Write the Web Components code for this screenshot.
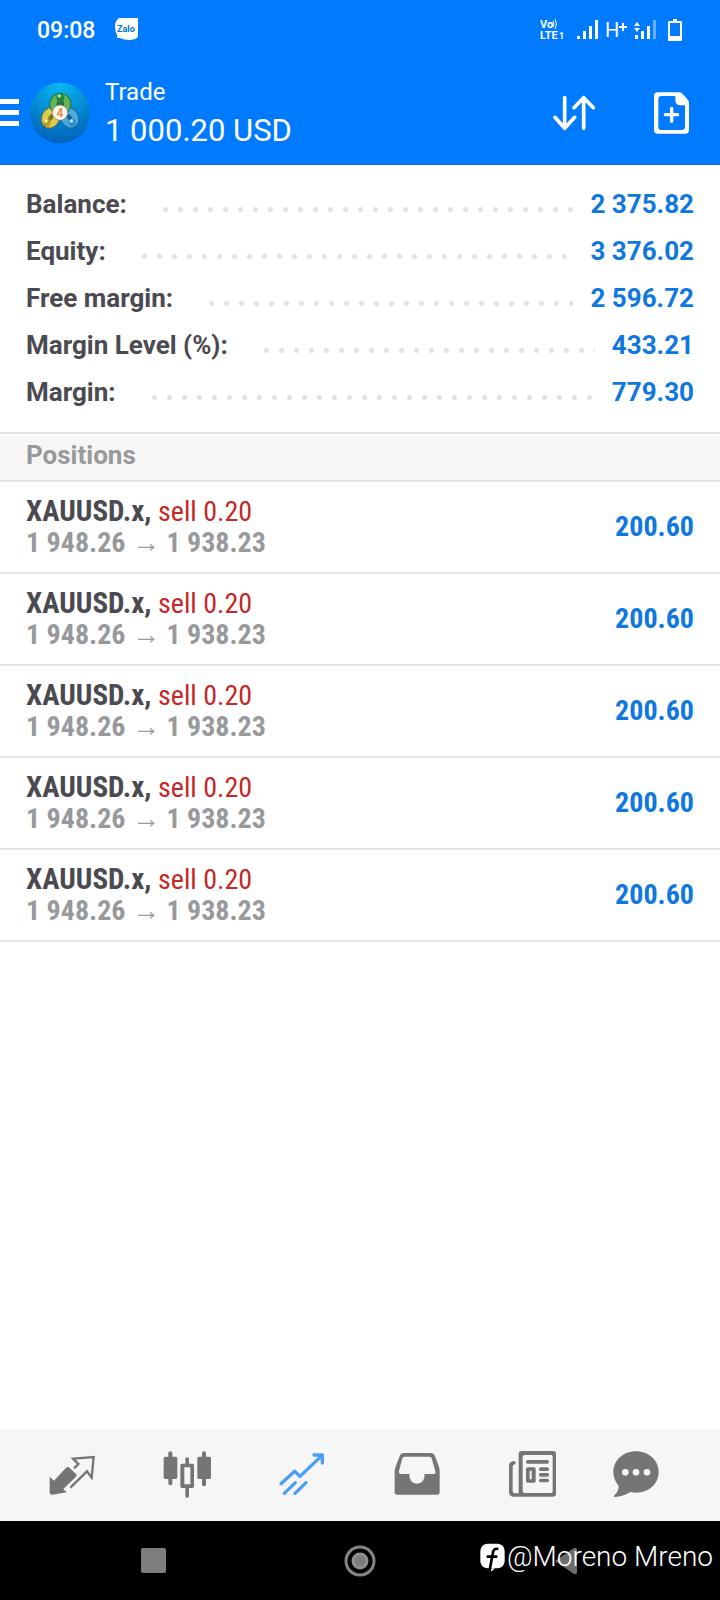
<!DOCTYPE html>
<html lang="en">
<head>
<meta charset="utf-8">
<meta name="viewport" content="width=device-width, initial-scale=1">
<title>Trade</title>
<style>
  html, body { margin: 0; }
  body { font-family: Roboto, "Liberation Sans", sans-serif; background: #fff; color: #4a4a50; }
</style>
</head>
<body>
<trade-app></trade-app>

<script>
const define = (name, html) => {
  const template = document.createElement('template');
  template.innerHTML = html;
  customElements.define(name, class extends HTMLElement {
    constructor() {
      super();
      this.attachShadow({ mode: 'open' }).append(template.content.cloneNode(true));
    }
  });
};

define('status-bar', `
<style>
  :host { display: flex; align-items: center; justify-content: space-between; height: 62px; padding: 0 36px 0 37px; color: #fff; }
  div { display: flex; align-items: center; }
  .left { gap: 20px; }
  time { font-size: 23px; line-height: 28px; font-weight: 500; }
  svg { display: block; }
  .left svg { margin-bottom: 4px; }
  text { fill: #fff; }
</style>
<div class="left">
  <time>09:08</time>
  <svg width="24" height="24" viewBox="0 0 24 24" role="img" aria-label="Zalo">
    <path fill="#fff" d="M4 1H22Q23 1 23 2V20Q20 23 14 23Q9 23 5 21L2 21Q3 20 2 18Q0 14 0 9Q0 4 4 1Z"/>
    <text x="2" y="15" style="fill:#0072e0;font:700 9px Roboto,sans-serif">Zalo</text>
  </svg>
</div>
<div>
  <svg width="144" height="24" viewBox="0 0 144 24">
    <text x="0" y="9" font-size="11" font-weight="700">Vo</text>
    <path d="M13 2Q15 5 13 8M15 0Q18 5 15 10" fill="none" stroke="#fff" stroke-width="1"/>
    <text x="0" y="20" font-size="11" font-weight="700">LTE</text>
    <text x="19" y="20" font-size="9" font-weight="700">1</text>
    <path fill="#fff" d="M37 17h3v3h-3zM43 12h3v8h-3zM49 7h3v13h-3zM55 1h3v19h-3z"/>
    <text x="65" y="18" font-size="20">H</text>
    <path fill="#fff" d="M79 7h8v2h-8zM82 4h2v8h-2zM94 7l3-4 3 4zM94 9l3 4 3-4zM95 16h3v4h-3zM101 12h3v8h-3zM107 7h3v13h-3z"/>
    <path fill="#65b3ff" d="M113 1h3v19h-3z"/>
    <path fill="#fff" fill-rule="evenodd" d="M133 0h4v2h4q1 0 1 1v18q0 1-1 1h-12q-1 0-1-1V3q0-1 1-1h4zM130 4v13h10V4z"/>
  </svg>
</div>`);

define('app-header', `
<style>
  :host { display: flex; align-items: center; height: 102px; padding-right: 31px; color: #fff; border-bottom: 1px solid #1467bd; }
  button { border: 0; background: none; padding: 0; color: inherit; cursor: pointer; }
  svg { display: block; }
  .menu { margin-right: 11px; }
  .titles { flex: 1; padding: 0 0 2px 15px; }
  h1, p { margin: 0; font-weight: 400; }
  h1 { font-size: 24px; line-height: 38px; }
  p { font-size: 31px; line-height: 40px; }
  .tools { display: flex; align-items: center; gap: 59px; }
</style>
<button class="menu" aria-label="Menu">
  <svg width="19" height="28" viewBox="0 0 19 28" fill="#fff"><path d="M0 0h19v5H0zM0 11h19v5H0zM0 22h19v5H0z"/></svg>
</button>
<svg width="60" height="62" viewBox="30 68 180 186" role="img" aria-label="MetaTrader 4">
  <defs>
    <radialGradient id="bg" cx=".5" cy="0" r="1"><stop offset="0" stop-color="#08b9f4"/><stop offset="1" stop-color="#0061b8"/></radialGradient>
  </defs>
  <ellipse cx="120" cy="161" rx="90" ry="91" fill="url(#bg)"/>
  <path d="M58 98H182M34 132H206M32 165H208M34 198H206M58 227H182M60 97V226M90 75V246M150 75V246M180 97V226" stroke="#35b3e4" stroke-width="2" opacity=".2"/>
  <g fill="none">
    <ellipse cx="149" cy="175" rx="16" ry="21" transform="rotate(-28 149 175)" fill="#1c5d8c" stroke="#175a88" stroke-width="24"/>
    <ellipse cx="149" cy="175" rx="16" ry="21" transform="rotate(-28 149 175)" stroke="#4aa9de" stroke-width="19"/>
    <ellipse cx="92" cy="175" rx="16" ry="21" transform="rotate(28 92 175)" fill="#7d7729" stroke="#6f6a22" stroke-width="24"/>
    <ellipse cx="92" cy="175" rx="16" ry="21" transform="rotate(28 92 175)" stroke="#d9cd4e" stroke-width="19"/>
    <ellipse cx="121" cy="134" rx="21" ry="21" fill="#2a7544" stroke="#20633a" stroke-width="24"/>
    <ellipse cx="121" cy="134" rx="21" ry="21" stroke="#62b75c" stroke-width="19"/>
  </g>
  <circle cx="121" cy="115" r="12" fill="#248b3b"/><circle cx="118" cy="110" r="5" fill="#a6e89c"/>
  <circle cx="81" cy="190" r="11" fill="#bb9d26"/><circle cx="78" cy="185" r="5" fill="#fff6a6"/>
  <circle cx="157" cy="190" r="11" fill="#2f8dcb"/><circle cx="154" cy="185" r="5" fill="#b5e6fb"/>
  <circle cx="120" cy="160" r="23" fill="#f8f6f0" stroke="#80744c" stroke-width="2"/>
  <text x="120" y="173" text-anchor="middle" font-size="36" font-weight="700" fill="#ec8b38">4</text>
</svg>
<div class="titles"><h1>Trade</h1><p>1 000.20 USD</p></div>
<div class="tools">
  <button aria-label="Sort">
    <svg width="42" height="36" viewBox="160 284 126 108" fill="none" stroke="#fff" stroke-width="11" stroke-linecap="round" stroke-linejoin="round"><path d="M195 292V384M166 351L195 384L225 351M252 384V292M223 322L252 292L281 322"/></svg>
  </button>
  <button aria-label="New order">
    <svg width="35" height="42" viewBox="462 275 105 126">
      <path fill="#fff" fill-rule="evenodd" d="M473 276H538Q544 276 548 281L562 297Q567 302 567 308V389Q567 400 556 400H473Q462 400 462 389V287Q462 276 473 276ZM484 287Q475 287 475 296V380Q475 389 484 389H545Q555 389 555 380V315H541Q526 315 526 300V287Z"/>
      <path d="M515 324V363M496 343H533" stroke="#fff" stroke-width="10" stroke-linecap="round"/>
    </svg>
  </button>
</div>`);

define('account-line', `
<style>
  :host { display: flex; align-items: center; height: 47px; font-size: 26px; line-height: 32px; font-weight: 700; }
  .dots { flex: 1; height: 5px; margin: 11px 17px 0 36px; background: radial-gradient(circle at 2.5px 2.5px, #e2e2e3 2px, transparent 3px) 0 0 / 15px 5px repeat-x; }
  .value { color: #0f78e0; }
</style>
<slot></slot><span class="dots"></span><slot class="value" name="value"></slot>`);

define('account-summary', `
<style>
  :host { display: block; padding: 15px 26px 17px; border-bottom: 2px solid #e3e3e4; }
</style>
<slot></slot>`);

define('section-title', `
<style>
  :host { display: block; margin-top: 2px; background: #f6f6f6; border-bottom: 2px solid #e3e3e4; }
  h2 { margin: 0; padding: 3px 26px 9px; font-size: 26px; line-height: 32px; font-weight: 700; color: #98999c; }
</style>
<h2><slot></slot></h2>`);

define('position-row', `
<style>
  :host { display: flex; align-items: center; justify-content: space-between; padding: 13px 26px; border-bottom: 2px solid #e3e3e4;
    font: 700 28px/32px "Roboto Condensed", Roboto, "Liberation Sans Narrow", sans-serif; }
  .title { height: 32px; font-size: 29px; }
  .side { font-size: 28px; font-weight: 400; color: #c62828; }
  .prices { color: #98999c; }
  .profit { color: #0f78e0; }
</style>
<div>
  <div class="title"><slot name="symbol"></slot>, <slot class="side" name="side"></slot></div>
  <div class="prices"><slot name="prices"></slot></div>
</div>
<slot class="profit" name="profit"></slot>`);

define('tab-bar', `
<style>
  :host { display: block; background: #f6f6f6; color: #757575; }
  nav { display: grid; grid-template-columns: repeat(5, 5fr) 4fr; padding: 0 38px 0 14px; height: 92px; }
  a { display: grid; place-items: center; color: inherit; }
  a[aria-current] { color: #4c9df5; }
  svg { width: 48px; height: 48px; display: block; fill: currentColor; }
  .line { fill: none; stroke: currentColor; stroke-linecap: round; stroke-linejoin: round; }
</style>
<nav aria-label="Sections">
  <a href="#quotes" aria-label="Quotes"><svg viewBox="85 93 144 144">
    <path d="M90 170L103 182L139 143Q145 139 150 144L170 163Q172 167 169 170L131 207L141 217L98 224Q90 225 90 217Z"/>
    <path d="M152 203L202 154L216 173L222 111L160 116L176 132L163 145" fill="none" stroke="currentColor" stroke-width="7"/>
  </svg></a>
  <a href="#charts" aria-label="Charts"><svg viewBox="430 93 144 144">
    <rect x="432" y="110" width="41" height="67" rx="5"/><rect x="446" y="94" width="12" height="102" rx="6"/>
    <rect x="533" y="110" width="41" height="67" rx="5"/><rect x="547" y="94" width="12" height="105" rx="6"/>
    <path fill-rule="evenodd" d="M487 131H518Q523 131 523 136V199Q523 204 518 204H487Q482 204 482 199V136Q482 131 487 131ZM494 142V193H512V142Z"/>
    <rect x="497" y="112" width="11" height="26" rx="5"/><rect x="497" y="198" width="11" height="35" rx="5"/>
  </svg></a>
  <a href="#trade" aria-label="Trade" aria-current="page"><svg viewBox="775 93 144 144">
    <path class="line" stroke-width="10" d="M784 191L825 154L841 169L907 106M883 105H908V129M794 220L827 188M826 220L859 188"/>
  </svg></a>
  <a href="#history" aria-label="History"><svg viewBox="100 93 144 144">
    <path fill-rule="evenodd" d="M132 99H213Q221 99 225 106L237 137Q240 145 240 155V217Q240 224 232 224H113Q105 224 105 217V155Q105 145 109 137L121 106Q124 99 132 99ZM134 110Q130 110 128 115L118 154Q117 162 124 162H149Q149 191 172 191Q195 191 195 162H222Q229 162 227 154L216 115Q214 110 209 110Z"/>
  </svg></a>
  <a href="#news" aria-label="News"><svg viewBox="445 93 144 144">
    <path fill-rule="evenodd" d="M487 93H580Q590 93 590 103V220Q590 230 580 230H463Q448 230 448 215V138Q448 124 463 123Q468 123 468 128T463 134Q459 134 459 140V213Q459 220 467 220H477V103Q477 93 487 93ZM494 105Q489 105 489 110V214Q489 219 494 219H574Q579 219 579 214V110Q579 105 574 105Z"/>
    <path fill-rule="evenodd" d="M504 142H523Q528 142 528 147V183Q528 188 523 188H504Q499 188 499 183V147Q499 142 504 142ZM510 152V178H516V152Z"/>
    <rect x="499" y="120" width="69" height="11" rx="5"/><rect x="538" y="142" width="30" height="11" rx="5"/><rect x="538" y="159" width="30" height="11" rx="5"/><rect x="538" y="176" width="30" height="11" rx="5"/>
  </svg></a>
  <a href="#messages" aria-label="Messages"><svg viewBox="756 93 144 144">
    <path d="M828 94C867 94 896 121 896 156C896 192 867 218 828 218Q819 218 811 216Q789 230 764 231Q759 230 763 226Q777 213 776 197Q760 179 760 156C760 121 789 94 828 94Z"/>
    <g fill="#f6f6f6"><circle cx="796" cy="157" r="10"/><circle cx="828" cy="157" r="10"/><circle cx="861" cy="157" r="10"/></g>
  </svg></a>
</nav>`);

define('system-nav', `
<style>
  :host { display: block; position: relative; background: #000; color: #fff; }
  nav { display: grid; grid-template-columns: repeat(3, 1fr); padding: 0 7%; height: 79px; }
  button { display: grid; place-items: center; border: 0; padding: 0; background: none; }
  svg { display: block; }
  .credit { position: absolute; right: 7px; top: 20px; display: flex; align-items: center; gap: 2px; font-size: 28px; line-height: 32px; font-weight: 300; }
</style>
<nav aria-label="System">
  <button aria-label="Recent apps"><svg width="26" height="26"><rect width="25" height="25" rx="2" fill="#7d7d7d"/></svg></button>
  <button aria-label="Home"><svg width="32" height="32" fill="none"><circle cx="16" cy="16" r="14" stroke="#858585" stroke-width="3"/><circle cx="16" cy="16" r="7" fill="#7d7d7d" stroke="#919191" stroke-width="3"/></svg></button>
  <button aria-label="Back"><svg width="26" height="26"><path fill="#6d6d6d" d="M2 13L21 0Q24-1 24 2V24Q24 27 21 26Z"/></svg></button>
</nav>
<div class="credit">
  <svg width="25" height="29" viewBox="367 370 75 87" aria-hidden="true">
    <rect x="368" y="372" width="73" height="74" rx="22" fill="#fff"/>
    <path d="M401 446L399 457L412 446Z" fill="#fff"/>
    <path d="M422 388Q407 384 405 403L395 457M387 411H419" fill="none" stroke="#000" stroke-width="8"/>
  </svg>
  <span>@Moreno Mreno</span>
</div>`);

define('trade-app', `
<style>
  :host { display: flex; flex-direction: column; min-height: 100vh; }
  header { background: #007bff; }
  main { flex: 1; }
</style>
<header><status-bar></status-bar><app-header></app-header></header>
<main>
  <account-summary>
    <account-line>Balance:<span slot="value">2 375.82</span></account-line>
    <account-line>Equity:<span slot="value">3 376.02</span></account-line>
    <account-line>Free margin:<span slot="value">2 596.72</span></account-line>
    <account-line>Margin Level (%):<span slot="value">433.21</span></account-line>
    <account-line>Margin:<span slot="value">779.30</span></account-line>
  </account-summary>
  <section-title>Positions</section-title>
  ${`<position-row><span slot="symbol">XAUUSD.x</span><span slot="side">sell 0.20</span><span slot="prices">1 948.26 → 1 938.23</span><span slot="profit">200.60</span></position-row>`.repeat(5)}
</main>
<tab-bar></tab-bar>
<system-nav></system-nav>`);
</script>
</body>
</html>
